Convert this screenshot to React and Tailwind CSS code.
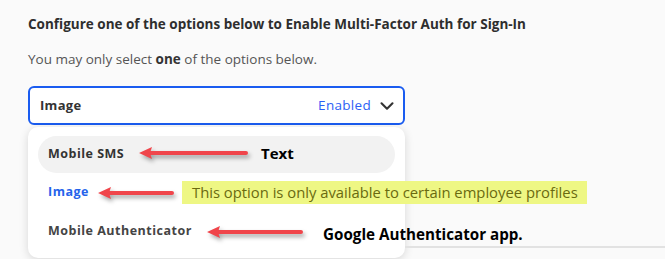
import { ChevronDown } from 'lucide-react';

function Arrow({ className, length }) {
  // red callout arrow pointing left, with a soft drop shadow
  return (
    <svg
      className={className}
      width={length + 6}
      height="20"
      viewBox={`0 0 ${length + 6} 20`}
      style={{ filter: 'drop-shadow(2px 3px 2px rgba(0,0,0,0.35))' }}
    >
      <line x1="10" y1="9" x2={length - 2} y2="9" stroke="#f0454b" strokeWidth="4" strokeLinecap="round" />
      <polygon points="1,9 14,3 12,9 14,15" fill="#f0454b" />
    </svg>
  );
}

export default function App() {
  return (
    <div className="relative w-[665px] h-[259px] overflow-hidden bg-[#fafafa] font-['Open_Sans',sans-serif]">
      <div className="px-[28px] pt-[15px]">
        <h2 className="text-[13.5px] leading-[18px] font-bold text-[#2e2e2e]">
          Configure one of the options below to Enable Multi-Factor Auth for Sign-In
        </h2>
        <p className="mt-[17px] text-[13.5px] leading-[18px] text-[#555]">
          You may only select <span className="font-bold text-[#333]">one</span> of the options below.
        </p>

        <div className="mt-[18px] w-[377px]">
          <button className="flex h-[39px] w-full items-center justify-between rounded-[6px] border-2 border-[#1a5cf0] bg-white pl-[10px] pr-[5px]">
            <span className="text-[13px] font-bold tracking-[0.3px] text-[#333]">Image</span>
            <span className="flex items-center gap-[5px]">
              <span className="text-[13.5px] tracking-[0.3px] text-[#2d5ff5]">Enabled</span>
              <ChevronDown size={22} strokeWidth={2.3} className="text-[#333]" />
            </span>
          </button>

          <div className="mt-[2px] h-[131px] rounded-[10px] bg-white px-[10px] pt-[9px] shadow-[0_2px_10px_rgba(0,0,0,0.14)]">
            <div className="flex h-[37px] items-center rounded-full bg-[#f2f2f2] px-[10px] text-[12.5px] font-bold tracking-[0.5px] text-[#333]">
              Mobile SMS
            </div>
            <div className="flex h-[39px] items-center px-[10px] text-[12.5px] font-bold tracking-[0.5px] text-[#2563eb]">
              Image
            </div>
            <div className="flex h-[39px] items-center px-[10px] text-[12.5px] font-bold tracking-[0.5px] text-[#444]">
              Mobile Authenticator
            </div>
          </div>
        </div>
      </div>

      <div className="absolute left-[405px] top-[246px] h-[2px] w-[260px] bg-[#e2e2e2]" />

      {/* annotations */}
      <Arrow className="absolute left-[138px] top-[144px]" length={110} />
      <span className="absolute left-[261px] top-[143px] text-[15px] font-bold leading-[20px] text-black">
        Text
      </span>

      <Arrow className="absolute left-[97px] top-[184px]" length={77} />
      <span className="absolute left-[182px] top-[181px] h-[23px] w-[405px] bg-[#eef784] pl-[10px] text-[14.8px] leading-[23px] text-[#6a6a10]">
        This option is only available to certain employee profiles
      </span>

      <Arrow className="absolute left-[206px] top-[223px]" length={97} />
      <span className="absolute left-[323px] top-[224px] text-[15.2px] font-bold leading-[20px] text-black">
        Google Authenticator app.
      </span>
    </div>
  );
}
